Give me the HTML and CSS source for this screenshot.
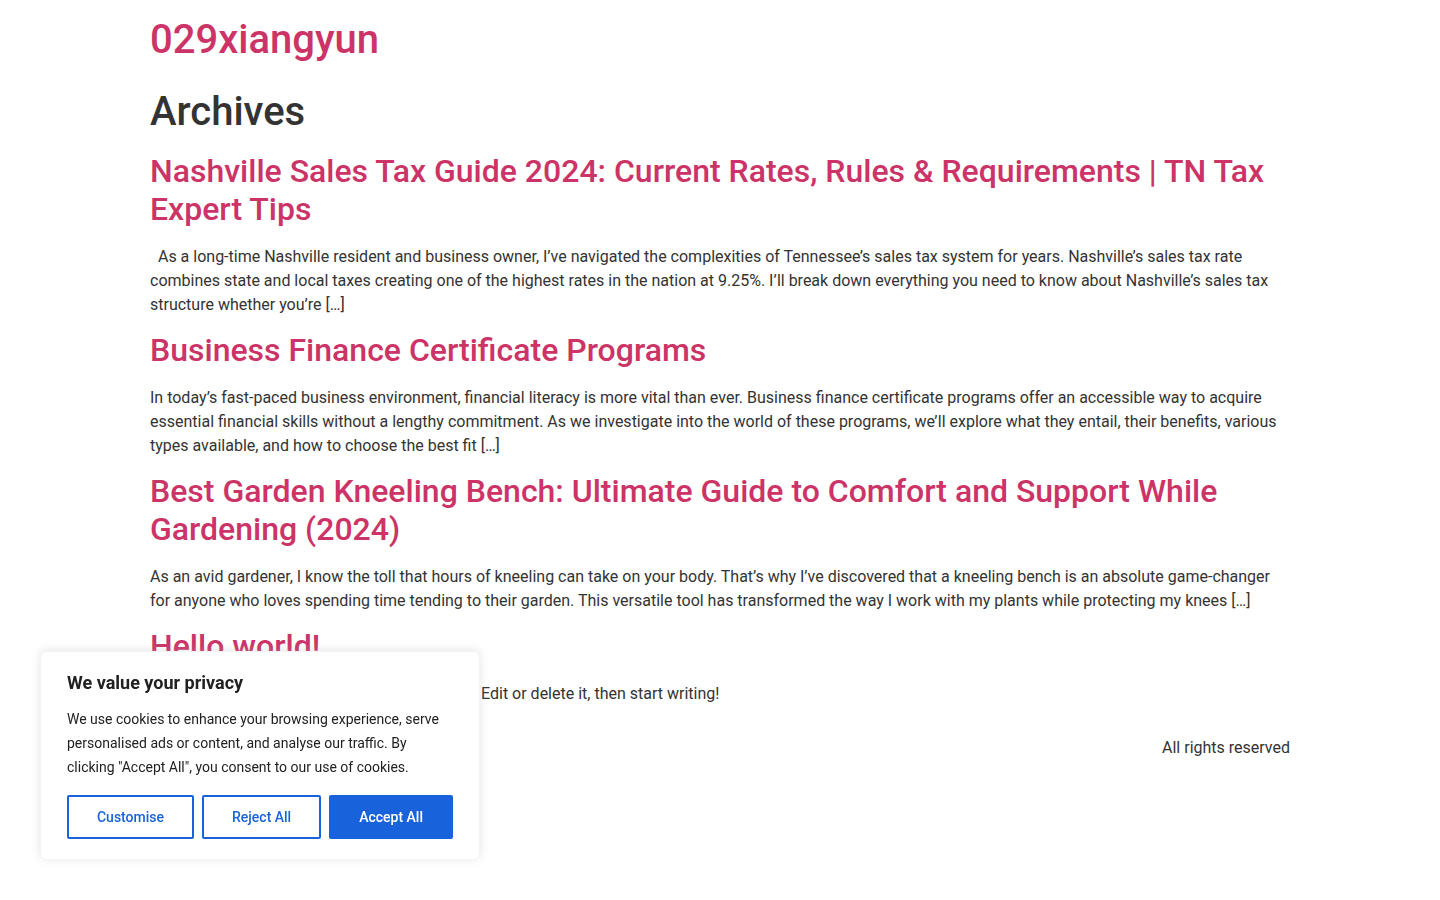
FILE: index.html
```html
<!DOCTYPE html>
<html lang="en">
<head>
    <meta charset="UTF-8">
    <title>Archives - 029xiangyun</title>
    <link rel="stylesheet" href="styles.css">
</head>
<body>
<header class="site-header">
    <h1 class="site-title"><a href="#">029xiangyun</a></h1>
</header>

<main class="site-main">
    <div class="page-header">
        <h1 class="entry-title">Archives</h1>
    </div>
    <div class="page-content">
        <article class="post">
            <h2 class="entry-title"><a href="#">Nashville Sales Tax Guide 2024: Current Rates, Rules &amp; Requirements | TN Tax Expert Tips</a></h2>
            <p>&nbsp; As a long-time Nashville resident and business owner, I’ve navigated the complexities of Tennessee’s sales tax system for years. Nashville’s sales tax rate combines state and local taxes creating one of the highest rates in the nation at 9.25%. I’ll break down everything you need to know about Nashville’s sales tax structure whether you’re […]</p>
        </article>
        <article class="post">
            <h2 class="entry-title"><a href="#">Business Finance Certificate Programs</a></h2>
            <p>In today’s fast-paced business environment, financial literacy is more vital than ever. Business finance certificate programs offer an accessible way to acquire essential financial skills without a lengthy commitment. As we investigate into the world of these programs, we’ll explore what they entail, their benefits, various types available, and how to choose the best fit […]</p>
        </article>
        <article class="post">
            <h2 class="entry-title"><a href="#">Best Garden Kneeling Bench: Ultimate Guide to Comfort and Support While Gardening (2024)</a></h2>
            <p>As an avid gardener, I know the toll that hours of kneeling can take on your body. That’s why I’ve discovered that a kneeling bench is an absolute game-changer for anyone who loves spending time tending to their garden. This versatile tool has transformed the way I work with my plants while protecting my knees […]</p>
        </article>
        <article class="post">
            <h2 class="entry-title"><a href="#">Hello world!</a></h2>
            <p>Welcome to WordPress. This is your first post. Edit or delete it, then start writing!</p>
        </article>
    </div>
</main>

<footer class="site-footer">
    <div class="footer-inner">
        <p class="footer-title"><a href="#">029xiangyun</a></p>
        <p class="copyright">All rights reserved</p>
    </div>
</footer>

<div class="cky-consent">
    <p class="cky-title">We value your privacy</p>
    <p class="cky-desc">We use cookies to enhance your browsing experience, serve personalised ads or content, and analyse our traffic. By clicking "Accept All", you consent to our use of cookies.</p>
    <div class="cky-buttons">
        <button class="cky-btn">Customise</button>
        <button class="cky-btn">Reject All</button>
        <button class="cky-btn cky-accept">Accept All</button>
    </div>
</div>
</body>
</html>
```

FILE: styles.css
```css
html, body {
    margin: 0;
    padding: 0;
}

body {
    font-family: Roboto, "Liberation Sans", sans-serif;
    font-size: 16px;
    line-height: 1.5;
    color: #333;
    background: #fff;
}

a {
    color: #c36;
    text-decoration: none;
}

h1, h2 {
    font-weight: 500;
    line-height: 1.2;
    margin: 8px 0 16px;
}

h1 {
    font-size: 40px;
}

h2 {
    font-size: 32px;
}

p {
    margin: 0 0 14.4px;
}

.site-header,
.site-main,
.footer-inner {
    max-width: 1140px;
    margin: 0 auto;
}

.site-header {
    padding: 16px 0;
}

.site-header .site-title {
    margin: 0;
}

.site-footer {
    padding: 16px 0;
}

.footer-inner {
    display: flex;
    justify-content: space-between;
}

.footer-inner p {
    margin: 0;
}

/* cookie notice */
.cky-consent {
    position: fixed;
    left: 40px;
    bottom: 40px;
    width: 440px;
    box-sizing: border-box;
    padding: 24px 26px 20px;
    background: #fff;
    border: 1px solid #f4f4f4;
    border-radius: 6px;
    box-shadow: 0 -1px 10px 0 rgba(172, 171, 171, 0.3);
    color: #212121;
}

.cky-title {
    margin: -5px 0 12px;
    font-size: 18px;
    font-weight: 700;
    line-height: 24px;
}

.cky-desc {
    margin: 0;
    font-size: 14px;
    line-height: 24px;
}

.cky-buttons {
    display: flex;
    gap: 8px;
    margin-top: 16px;
}

.cky-btn {
    flex: auto;
    padding: 8px 27px;
    font-family: Roboto, "Liberation Sans", sans-serif;
    font-size: 14px;
    font-weight: 500;
    line-height: 24px;
    color: #1863dc;
    background: transparent;
    border: 2px solid #1863dc;
    border-radius: 2px;
    cursor: pointer;
}

.cky-accept {
    color: #fff;
    background: #1863dc;
}
```
